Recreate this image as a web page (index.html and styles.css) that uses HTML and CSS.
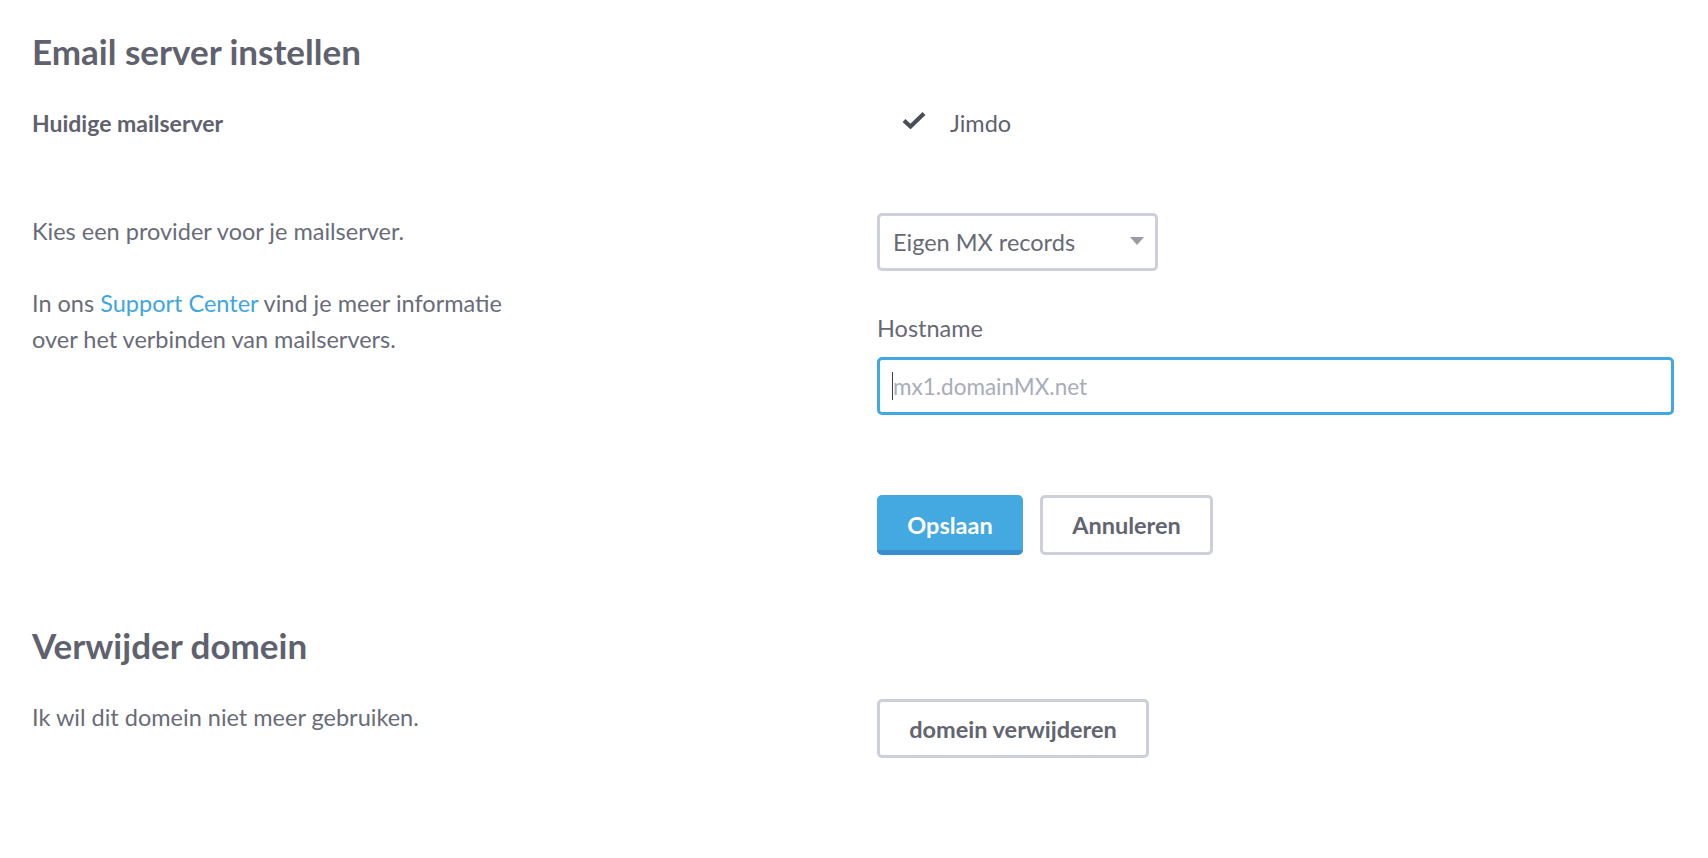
FILE: index.html
```html
<!DOCTYPE html>
<html lang="nl">
<head>
  <meta charset="UTF-8" />
  <meta name="viewport" content="width=device-width, initial-scale=1" />
  <title>Email server instellen</title>
  <link rel="stylesheet" href="styles.css">
</head>
<body>
  <div class="page">
    <h1>Email server instellen</h1>

    <div class="row row-current">
      <div class="label-strong">Huidige mailserver</div>
      <div class="current">
        <svg class="check" width="24" height="18" viewBox="0 0 24 18">
          <path d="M2 9.5 L8.5 15.5 L22 2.5" fill="none" stroke="#4b4d58" stroke-width="4.2" stroke-linecap="butt" stroke-linejoin="miter"/>
        </svg>
        <span>Jimdo</span>
      </div>
    </div>

    <div class="row row-provider">
      <div class="info">
        <p>Kies een provider voor je mailserver.</p>
        <p>In ons <a href="#">Support Center</a> vind je meer informatie<br>over het verbinden van mailservers.</p>
      </div>
      <div class="form">
        <div class="select">
          <span>Eigen MX records</span>
          <span class="arrow"></span>
        </div>
        <label class="field-label" for="hostname">Hostname</label>
        <div class="field">
          <input id="hostname" type="text" placeholder="mx1.domainMX.net" />
          <span class="caret"></span>
        </div>
        <div class="actions">
          <button class="btn btn-primary">Opslaan</button>
          <button class="btn btn-outline">Annuleren</button>
        </div>
      </div>
    </div>

    <h1 class="second">Verwijder domein</h1>

    <div class="row row-delete">
      <div class="info">
        <p>Ik wil dit domein niet meer gebruiken.</p>
      </div>
      <div>
        <button class="btn btn-outline btn-wide">domein verwijderen</button>
      </div>
    </div>
  </div>
</body>
</html>
```

FILE: styles.css
```css
body, html {
  margin: 0;
  background: #fff;
  font-family: 'Lato', 'Open Sans', sans-serif;
  color: #696c78;
}
.page {
  padding: 33px 34px 0 32px;
}
h1 {
  margin: 0;
  font-size: 35px;
  line-height: 36px;
  font-weight: 700;
  color: #5f626e;
}
h1.second {
  margin-top: 72px;
}
.row {
  display: grid;
  grid-template-columns: 845px 1fr;
  align-items: start;
}
.row-current {
  margin-top: 36px;
  align-items: center;
}
.row-provider {
  margin-top: 72px;
}
.row-delete {
  margin-top: 36px;
}
.label-strong {
  font-size: 23px;
  line-height: 36px;
  font-weight: 700;
  color: #5f626e;
}
.current {
  display: flex;
  align-items: center;
  gap: 24px;
  padding-left: 25px;
  font-size: 23.5px;
  line-height: 36px;
  color: #5f626e;
}
.check {
  margin-top: -6px;
}
.info p {
  margin: 0 0 36px;
  font-size: 23.5px;
  line-height: 36px;
}
.info a {
  color: #3ea6de;
  text-decoration: none;
}
.form {
  display: flex;
  flex-direction: column;
  align-items: flex-start;
}
.select {
  box-sizing: border-box;
  width: 281px;
  height: 58px;
  border: 3px solid #cdd0dc;
  border-radius: 5px;
  display: flex;
  align-items: center;
  justify-content: space-between;
  padding: 0 11px 0 13px;
  font-size: 23.5px;
  color: #676a76;
}
.arrow {
  width: 0;
  height: 0;
  border-left: 7px solid transparent;
  border-right: 7px solid transparent;
  border-top: 8px solid #9c9ca4;
  margin-top: -2px;
}
.field-label {
  margin-top: 43px;
  font-size: 23.5px;
  line-height: 28px;
  color: #676a76;
}
.field {
  position: relative;
  margin-top: 15px;
  width: 100%;
}
.field input {
  box-sizing: border-box;
  width: 100%;
  height: 58px;
  border: 3px solid #43a8df;
  border-radius: 5px;
  padding: 0 13px;
  font-family: inherit;
  font-size: 22.5px;
  color: #676a76;
  outline: none;
  caret-color: transparent;
}
.field input::placeholder {
  color: #a9acb9;
}
.caret {
  position: absolute;
  left: 15px;
  top: 15px;
  width: 1px;
  height: 28px;
  background: #3c3e46;
}
.actions {
  display: flex;
  gap: 17px;
  margin-top: 80px;
}
.btn {
  box-sizing: border-box;
  height: 60px;
  border-radius: 5px;
  font-family: inherit;
  font-size: 23.5px;
  font-weight: 700;
  cursor: pointer;
  padding: 0;
}
.btn-primary {
  width: 146px;
  background: #44a9e0;
  border: none;
  border-bottom: 5px solid #3a8dcc;
  color: #fff;
  padding-top: 5px;
}
.btn-outline {
  width: 173px;
  background: #fff;
  border: 3px solid #cdd0dc;
  color: #62656f;
}
.btn-wide {
  width: 272px;
  height: 59px;
}
```
